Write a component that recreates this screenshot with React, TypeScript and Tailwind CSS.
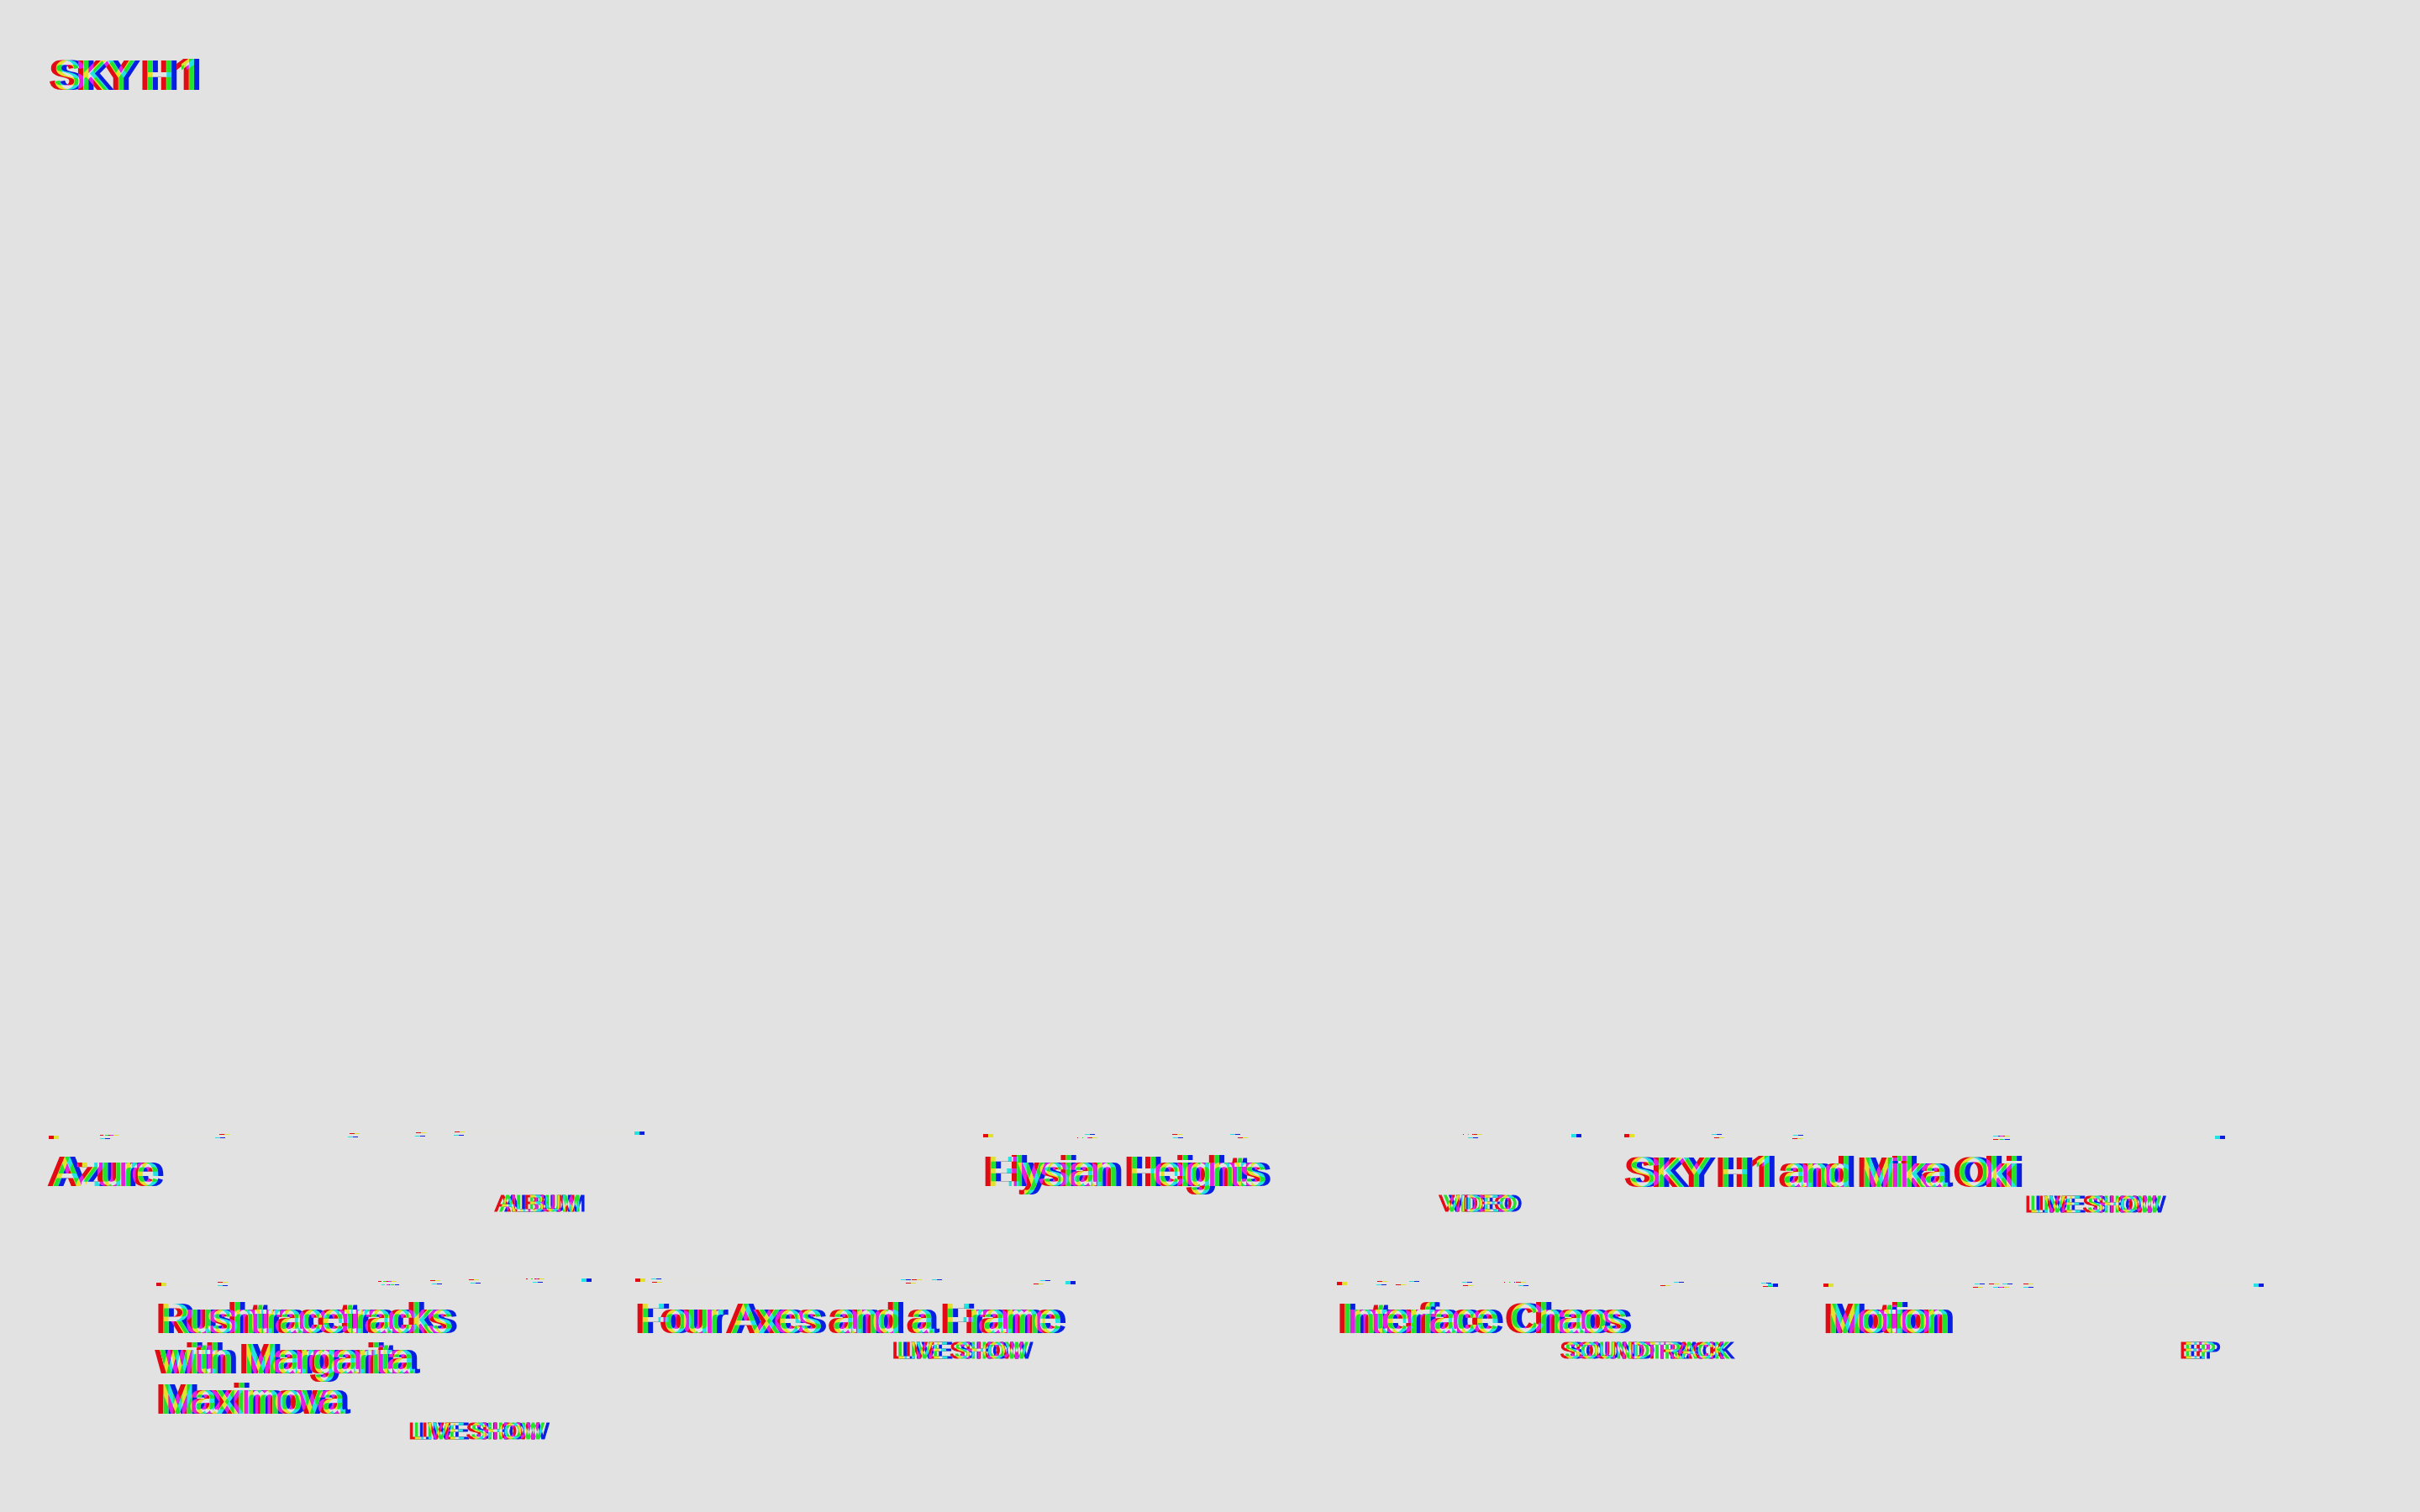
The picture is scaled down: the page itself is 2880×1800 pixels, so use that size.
import { Fragment } from "react";

type Step = [top: number, bottom: number, dir: 1 | -1];

type Release = {
  title: string;
  kind: string;
  slot: string;
  width: number;
  start: number;
  steps: Step[];
  bits?: [x: number, y: number, w: number][];
};

const firstRow: Release[] = [
  {
    title: "Azure",
    kind: "ALBUM",
    slot: "w-[24.2%] ml-16",
    width: 696,
    start: 7,
    steps: [[71, 61, -1], [203, 198, -1], [358, 356, -1], [436, 435, -1], [482, 481, -1]],
    bits: [[61, 6, 4], [421, 7, 1], [427, 7, 1]],
  },
  {
    title: "Elysian Heights",
    kind: "VIDEO",
    slot: "w-[24.3%] ml-[14.4%]",
    width: 700,
    start: 5,
    steps: [[121, 124, 1], [225, 226, -1], [294, 303, 1], [582, 577, -1]],
    bits: [[112, 9, 1], [571, 5, 1]],
  },
  {
    title: "SKY H1 and Mika Oki",
    kind: "LIVE SHOW",
    slot: "w-[24.4%] ml-[2.2%]",
    width: 702,
    start: 5,
    steps: [[104, 107, 1], [201, 200, 1], [439, 439, 1], [447, 447, -1]],
    bits: [[183, 6, 4]],
  },
];

const secondRow: Release[] = [
  {
    title: "Rushtracetracks\nwith Margarita\nMaximova",
    kind: "LIVE SHOW",
    slot: "w-[17.6%] ml-[6.65%]",
    width: 507,
    start: 7,
    steps: [[73, 73, -1], [274, 268, -1], [326, 328, -1], [372, 374, -1], [450, 448, -1]],
    bits: [[264, 5, 4], [272, 9, 5], [440, 2, 2]],
  },
  {
    title: "Four Axes and a Frame",
    kind: "LIVE SHOW",
    slot: "w-[17.8%] ml-[2.2%]",
    width: 514,
    start: 2,
    steps: [[19, 20, 1], [317, 323, 1], [483, 475, 1]],
    bits: [[330, 3, 24]],
  },
  {
    title: "Interface Chaos",
    kind: "SOUNDTRACK",
    slot: "w-[17.8%] ml-[11.2%]",
    width: 514,
    start: 6,
    steps: [[48, 47, -1], [86, 70, 1], [149, 150, 1], [214, 217, -1], [402, 386, 1], [506, 508, 1]],
    bits: [[200, 6, 1]],
  },
  {
    title: "Motion",
    kind: "EP",
    slot: "w-[17.8%] ml-[2.3%]",
    width: 512,
    start: 8,
    steps: [[180, 178, 1], [197, 202, -1], [213, 209, 1], [238, 238, -1]],
  },
];

/* Outline of a four pixel rule that climbs or drops one pixel at each step. */
function rulePath({ width, start, steps, bits = [] }: Release) {
  let y = start;
  let top = `M0 ${y}`;
  const under: string[] = [];
  for (const [t, b, dir] of steps) {
    top += `H${t}V${y + dir}`;
    under.unshift(`H${b}V${y + 4}`);
    y += dir;
  }
  const extra = bits.map(([x, by, w]) => `M${x} ${by}h${w}v1h-${w}z`).join("");
  return `${top}H${width}V${y + 4}${under.join("")}H0Z${extra}`;
}

function SplitFilter() {
  return (
    <svg className="absolute size-0" aria-hidden="true">
      <filter id="rgb-split" x="-20%" y="-50%" width="140%" height="200%" colorInterpolationFilters="sRGB">
        <feFlood floodColor="#e20a15" result="redFill" />
        <feOffset in="SourceAlpha" dx="-6" result="left" />
        <feComposite in="redFill" in2="left" operator="in" result="red" />
        <feFlood floodColor="#24e22a" result="greenFill" />
        <feComposite in="greenFill" in2="SourceAlpha" operator="in" result="green" />
        <feFlood floodColor="#081ee0" result="blueFill" />
        <feOffset in="SourceAlpha" dx="6" result="right" />
        <feComposite in="blueFill" in2="right" operator="in" result="blue" />
        <feBlend in="red" in2="green" mode="lighten" result="redGreen" />
        <feBlend in="redGreen" in2="blue" mode="lighten" />
      </filter>
    </svg>
  );
}

/* The figure one is set in a face that draws it without a foot. */
function Name({ text }: { text: string }) {
  return text.split("1").map((part, i) => (
    <Fragment key={i}>
      {i > 0 && <span className="inline-block w-[27px] text-right font-['Inter',sans-serif] leading-none">1</span>}
      {part}
    </Fragment>
  ));
}

function ReleaseCard({ release }: { release: Release }) {
  return (
    <li className={`shrink-0 ${release.slot}`}>
      <a href="#" className="block">
        <svg
          className="block h-4 w-full [filter:url(#rgb-split)]"
          viewBox={`0 0 ${release.width} 16`}
          preserveAspectRatio="none"
          shapeRendering="crispEdges"
          aria-hidden="true"
        >
          <path d={rulePath(release)} />
        </svg>
        <h2 className="mt-2.5 text-[48px] leading-[48px] whitespace-pre-line [-webkit-text-stroke:2px_black] [filter:url(#rgb-split)]">
          <Name text={release.title} />
        </h2>
        <p className="pr-[10%] text-right text-[28px] leading-7 [-webkit-text-stroke:1px_black] [filter:url(#rgb-split)]">
          {release.kind}
        </p>
      </a>
    </li>
  );
}

export default function App() {
  return (
    <div className="flex min-h-screen flex-col justify-between overflow-hidden bg-[#e2e2e2] pt-16 pb-[82px] font-['Liberation_Sans',sans-serif] text-black">
      <SplitFilter />
      <header className="px-16">
        <h1 className="w-fit text-[48px] leading-[52px] [-webkit-text-stroke:2px_black] [filter:url(#rgb-split)]">
          <a href="#">
            <Name text="SKY H1" />
          </a>
        </h1>
      </header>
      <main className="flex flex-col gap-[72px]">
        <ul className="flex items-start">
          {firstRow.map((r) => (
            <ReleaseCard key={r.title} release={r} />
          ))}
        </ul>
        <ul className="flex items-start">
          {secondRow.map((r) => (
            <ReleaseCard key={r.title} release={r} />
          ))}
        </ul>
      </main>
    </div>
  );
}
